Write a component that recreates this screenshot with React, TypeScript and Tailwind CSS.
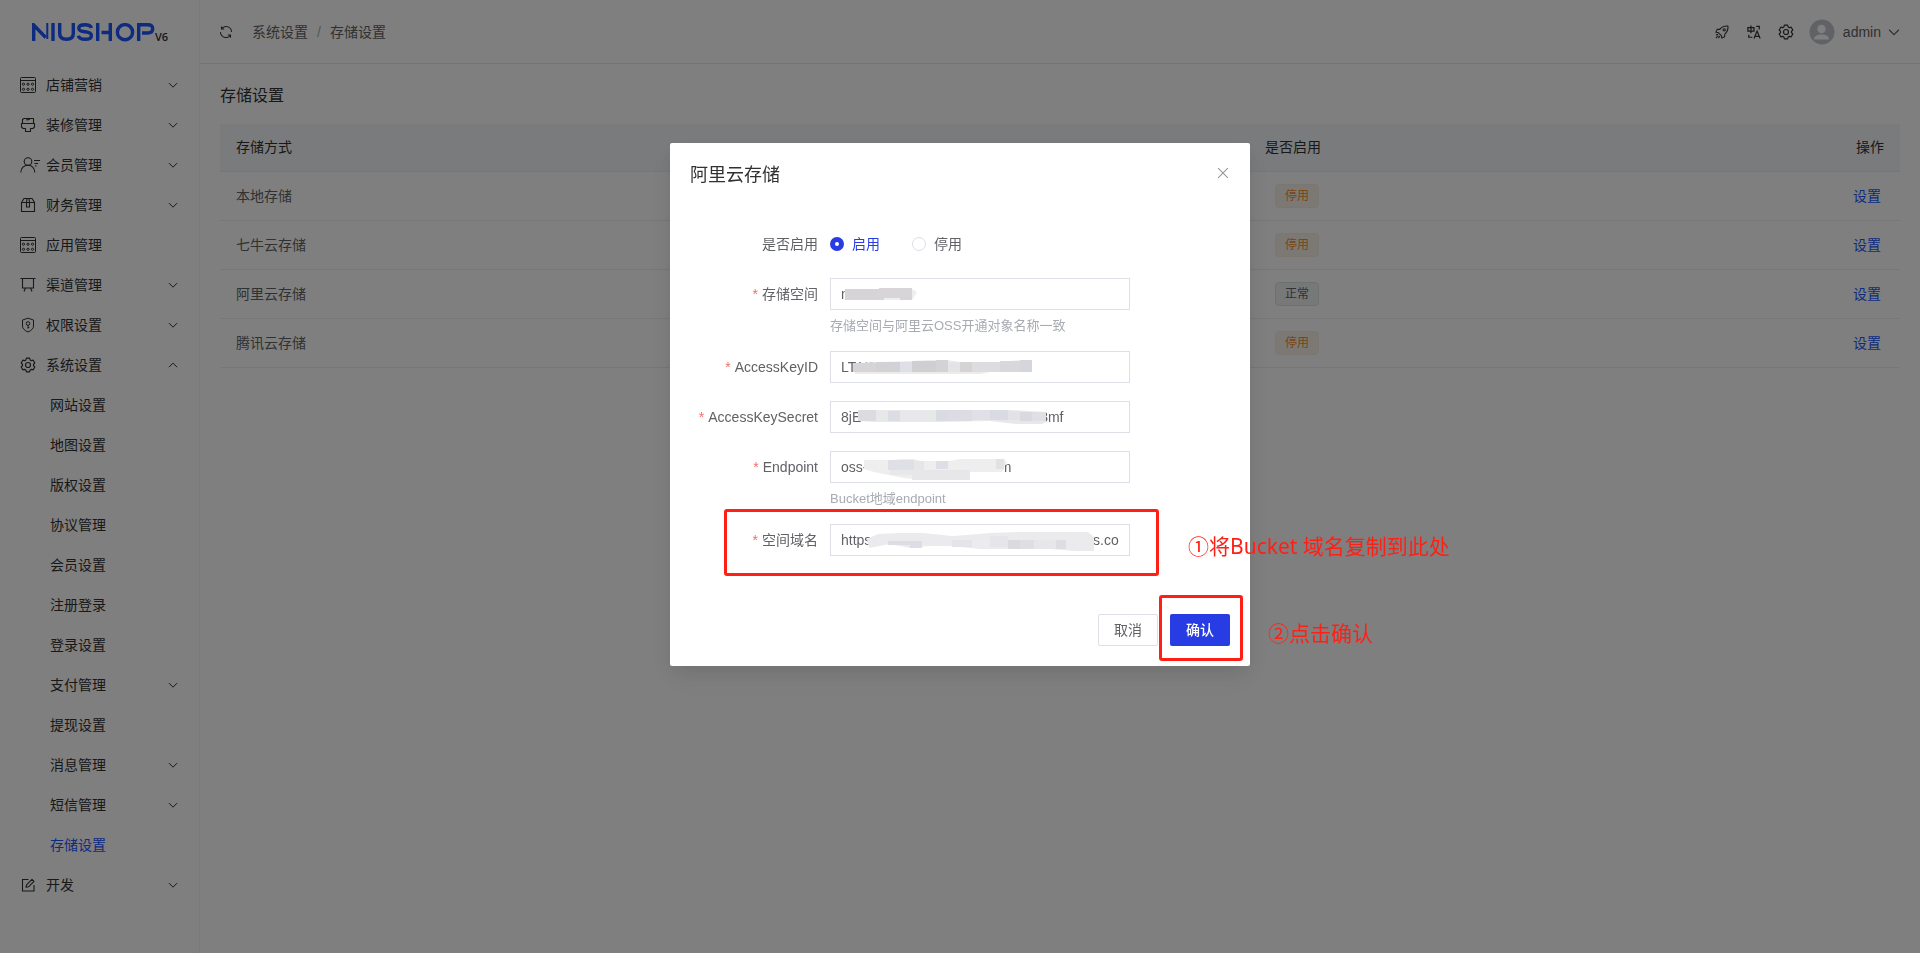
import { useState } from "react";
import type { ReactNode } from "react";

type MenuItem = { title: string; icon?: ReactNode; arrow?: "down" | "up"; active?: boolean };

function Svg({ children, size = 16, className = "", width = 1.1 }: { children: ReactNode; size?: number; className?: string; width?: number }) {
  return (
    <svg width={size} height={size} viewBox="0 0 16 16" fill="none" stroke="currentColor" strokeWidth={width} className={className} aria-hidden="true">
      {children}
    </svg>
  );
}

const GEAR =
  "M6.4 1.2h3.2l.5 1.7 1.3.8 1.8-.5 1.6 2.8-1.3 1.3v1.4l1.3 1.3-1.6 2.8-1.8-.5-1.3.8-.5 1.7H6.4l-.5-1.7-1.3-.8-1.8.5-1.6-2.8 1.3-1.3V7.3L1.2 6l1.6-2.8 1.8.5 1.3-.8z";

function GearIcon({ size = 16 }: { size?: number }) {
  return (
    <Svg size={size} width={1.2}>
      <path d={GEAR} strokeLinejoin="round" />
      <circle cx="8" cy="8" r="2.5" />
    </Svg>
  );
}

function GridIcon() {
  return (
    <Svg width={1}>
      <rect x="0.5" y="0.5" width="15" height="15" rx="1" />
      <path d="M0.5 3.5h15" />
      {[3.5, 8, 12.5].map((x) => (
        <g key={x}>
          <circle cx={x} cy="7.200" r="1.100" />
          <circle cx={x} cy="12.300" r="1.100" />
        </g>
      ))}
    </Svg>
  );
}

function BrushIcon() {
  return (
    <Svg>
      <path d="M2.500 6V2.500l1.500-1h9.500V6M7 1.500v1.500l2-.5 1-1M1.500 6.500h13v3.500l-1.500 1.500h-2.500v3h-5v-3H3L1.500 10z" strokeLinejoin="round" />
    </Svg>
  );
}

function MemberIcon() {
  return (
    <Svg className="overflow-visible">
      <circle cx="8" cy="4.500" r="3.800" />
      <path d="M0.800 15.500c.4-4.300 3.200-7.200 7.200-7.200s6.400 2.900 6.800 7.200M14 3.500h6M14.500 6.500H18M15 9h1.500" />
    </Svg>
  );
}

function FinanceIcon() {
  return (
    <Svg>
      <path d="M1.500 5.500 4 1.500h8l2.500 4v9h-13zM1.500 5.500h13M6.500 5.500v4.500h3V5.500M6.500 5.500l.5-4M9.500 5.500l-.5-4" />
    </Svg>
  );
}

function BoardIcon() {
  return (
    <Svg>
      <path d="M0.500 1.500h15M2.500 1.500v9.500h11V1.500M5.500 11l-1.500 3.500M10.500 11l1.500 3.500" />
    </Svg>
  );
}

function ShieldIcon() {
  return (
    <Svg width={1}>
      <path d="M8 1.200 13.500 3v6c0 2.500-2 4.500-5.500 6-3.500-1.500-5.500-3.500-5.500-6V3z" strokeLinejoin="round" />
      <circle cx="8" cy="6.500" r="1.800" />
      <path d="M8 8.300v3.400M8 10.500h1.300" />
    </Svg>
  );
}

function EditIcon() {
  return (
    <Svg>
      <path d="M8.500 2.500h-6v11.500H14V8" />
      <path d="M6 10.300 6.500 7.800 12 2.300l2 2-5.500 5.500z" strokeLinejoin="round" />
    </Svg>
  );
}

function RefreshIcon() {
  return (
    <svg width="16" height="16" viewBox="0 0 1024 1024" fill="currentColor" aria-hidden="true">
      <path d="M771.776 794.880A384 384 0 0 1 128 512h64a320 320 0 0 0 555.712 216.448H654.720a32 32 0 1 1 0-64h149.056a32 32 0 0 1 32 32v148.928a32 32 0 1 1-64 0v-50.560zM276.288 295.616h92.992a32 32 0 0 1 0 64H220.160a32 32 0 0 1-32-32V178.560a32 32 0 0 1 64 0v50.560A384 384 0 0 1 896.128 512h-64a320 320 0 0 0-555.776-216.384z" />
    </svg>
  );
}

function Chevron({ up = false, size = 10 }: { up?: boolean; size?: number }) {
  return (
    <Svg size={size} width={1.6}>
      <path d={up ? "M1.500 11.500 8 5l6.500 6.500" : "M1.500 5 8 11.500 14.500 5"} />
    </Svg>
  );
}

function Logo() {
  return (
    <svg width="124" height="20" viewBox="0 0 124 20" fill="none" stroke="#1a56ff" strokeWidth="3.400" aria-hidden="true">
      <path d="M2.700 18V2l12 12.500" />
      <path d="M16.300 0v16" strokeWidth="2" />
      <path d="M22 0v18M28.700 0v10.500c0 3.800 2.300 5.800 6.800 5.800s6.800-2 6.800-5.800V0" />
      <path d="M60.500 5c-.8-2.300-2.800-3.300-6.500-3.300-4 0-6.200 1.100-6.200 3.500 0 2.300 1.800 3.100 6.200 3.600 4.300.5 6.400 1.400 6.400 3.900s-2.200 3.600-6.400 3.600c-4 0-6-1.100-6.700-3.500" />
      <path d="M66.700 0v18M70.500 9.500h8M79.300 0v18" />
      <circle cx="94" cy="9.200" r="7.600" />
      <path d="M107.700 18V1.700h9c3.400 0 5 1.400 5 4.100s-1.600 4.200-5 4.200H111" />
    </svg>
  );
}

const topMenu: MenuItem[] = [
  { title: "店铺营销", icon: <GridIcon />, arrow: "down" },
  { title: "装修管理", icon: <BrushIcon />, arrow: "down" },
  { title: "会员管理", icon: <MemberIcon />, arrow: "down" },
  { title: "财务管理", icon: <FinanceIcon />, arrow: "down" },
  { title: "应用管理", icon: <GridIcon /> },
  { title: "渠道管理", icon: <BoardIcon />, arrow: "down" },
  { title: "权限设置", icon: <ShieldIcon />, arrow: "down" },
  { title: "系统设置", icon: <GearIcon />, arrow: "up" },
];

const systemMenu: MenuItem[] = [
  { title: "网站设置" },
  { title: "地图设置" },
  { title: "版权设置" },
  { title: "协议管理" },
  { title: "会员设置" },
  { title: "注册登录" },
  { title: "登录设置" },
  { title: "支付管理", arrow: "down" },
  { title: "提现设置" },
  { title: "消息管理", arrow: "down" },
  { title: "短信管理", arrow: "down" },
  { title: "存储设置", active: true },
];

const storages = [
  { name: "本地存储", enabled: false },
  { name: "七牛云存储", enabled: false },
  { name: "阿里云存储", enabled: true },
  { name: "腾讯云存储", enabled: false },
];

function MenuRow({ item }: { item: MenuItem }) {
  return (
    <li>
      <a href="#" className={`flex h-10 items-center pr-[21px] ${item.icon ? "pl-5" : "pl-[50px]"} ${item.active ? "text-[#1a56ff]" : "text-[#303133]"}`}>
        {item.icon && <span className="mr-[10px] shrink-0">{item.icon}</span>}
        <span className="flex-1">{item.title}</span>
        {item.arrow && <Chevron up={item.arrow === "up"} />}
      </a>
    </li>
  );
}

function Sidebar() {
  return (
    <aside className="w-[200px] shrink-0 border-r border-[#f4f4f5] bg-white">
      <div className="flex h-[65px] items-center pl-[31px]">
        <Logo />
        <span className="mt-2 font-['Open_Sans',sans-serif] text-[11px] font-semibold text-[#303133]">V6</span>
      </div>
      <nav>
        <ul>
          {topMenu.map((item) => (
            <MenuRow key={item.title} item={item} />
          ))}
          {systemMenu.map((item) => (
            <MenuRow key={item.title} item={item} />
          ))}
          <MenuRow item={{ title: "开发", icon: <EditIcon />, arrow: "down" }} />
        </ul>
      </nav>
    </aside>
  );
}

function Header() {
  return (
    <header className="flex h-16 items-center justify-between border-b border-[#e4e7ed] pr-5 pl-[18px] text-[#606266]">
      <div className="flex items-center">
        <button aria-label="刷新" className="mr-[18px] text-[#303133]">
          <RefreshIcon />
        </button>
        <span>系统设置</span>
        <span className="mx-[9px] text-[#a8abb2]">/</span>
        <span>存储设置</span>
      </div>
      <div className="flex items-center text-[#303133]">
        <button aria-label="升级" className="mr-[18px]">
          <Svg size={14} width={1.200}>
            <path d="M14.800 1.200c-4.500-.3-7.300 1-9.300 3.800L2.500 5 1 8.200l2.500.3 4 4 .3 2.500L11 13.500l.2-3c2.600-2.200 4-5 3.600-9.300zM3.500 10.500 1 11.500M5.500 12.500 4 15M3.800 12.200 1 15" strokeLinejoin="round" />
            <circle cx="10.500" cy="5.500" r="1.300" />
          </Svg>
        </button>
        <button aria-label="语言" className="mr-[17px]">
          <Svg size={14} width={1.400}>
            <path d="M1 3h7v4H1zM4.500.5v9M10.500 1.500H14V5M2 11v3h4M8 15.500 11.500 7l3.500 8.500M9.200 13h4.600" />
          </Svg>
        </button>
        <button aria-label="设置" className="mr-[15px]">
          <GearIcon />
        </button>
        <button className="flex items-center text-[#606266]">
          <svg width="26" height="26" viewBox="0 0 26 26" aria-hidden="true">
            <circle cx="13" cy="13" r="12.500" fill="#c0c4cc" />
            <circle cx="12.500" cy="10" r="4.200" fill="#fff" />
            <path d="M5 20.500c0-3.500 3-5 7.500-5s7.500 1.500 7.500 5z" fill="#fff" />
          </svg>
          <span className="mr-[7px] ml-2">admin</span>
          <Chevron size={12} />
        </button>
      </div>
    </header>
  );
}

function StorageTable() {
  return (
    <table className="w-full table-fixed text-left text-[#606266]">
      <thead>
        <tr className="h-[47px] border-b border-[#ebeef5] bg-[#f5f7fa] text-[#303133]">
          <th className="px-4 font-normal">存储方式</th>
          <th className="w-[425px] px-4 font-normal">是否启用</th>
          <th className="w-[226px] px-4 text-right font-normal">操作</th>
        </tr>
      </thead>
      <tbody>
        {storages.map((row) => (
          <tr key={row.name} className="h-[49px] border-b border-[#ebeef5]">
            <td className="px-4">{row.name}</td>
            <td className="px-[26px]">
              <span
                className={`inline-flex h-6 items-center rounded border px-[9px] text-xs ${
                  row.enabled ? "border-[#dcdfe6] bg-[#eff2f2] text-[#606266]" : "border-[#f8ede0] bg-[#f9f2ea] text-[#f28a32]"
                }`}
              >
                {row.enabled ? "正常" : "停用"}
              </span>
            </td>
            <td className="px-[19px] text-right">
              <button className="text-[#1a56ff]">设置</button>
            </td>
          </tr>
        ))}
      </tbody>
    </table>
  );
}

type Piece = [number, number, number, number, string];
type Mask = { shape: string; fill: string; blocks: Piece[] };

// smudges that hide part of a saved value: an outline, then blocks of x, y, width, height and fill
const masks: Record<string, Mask> = {
  bucket: { shape: "M15 11H49V10H80L87 14 82 22H15z", fill: "#eeedef", blocks: [[15, 11, 39, 11, "#d6d4d7"], [49, 10, 33, 10, "#d7d5d7"], [70, 18, 12, 4, "#d6d4d7"]] },
  keyId: {
    shape: "M23 12 46 11 82 10 98 9H118L130 11H170L190 9H202V21H160L150 23H25z",
    fill: "#ececed",
    blocks: [
      [23, 12, 23, 9, "#d6d4d6"], [46, 11, 24, 10, "#d2d1d4"], [70, 11, 12, 10, "#dedfe7"], [82, 10, 24, 11, "#cfcfd1"],
      [106, 9, 12, 12, "#d3d3d5"], [118, 11, 12, 10, "#e4e4e7"], [130, 11, 12, 10, "#d5d3d4"], [142, 11, 28, 10, "#dcdce1"],
      [170, 10, 20, 11, "#d8d7d9"], [190, 9, 12, 12, "#d5d6db"],
    ],
  },
  secret: {
    shape: "M28 9H106L180 9 216 11V21L212 23H186L160 20 106 21H46L28 20z",
    fill: "#e8e8ea",
    blocks: [
      [28, 9, 18, 11, "#dcdce0"], [58, 10, 12, 10, "#dbdde5"], [106, 9, 12, 11, "#d9dbe3"], [118, 9, 24, 11, "#dcdce2"],
      [142, 9, 18, 10, "#e0e0e6"], [160, 9, 18, 10, "#d9dae2"], [178, 10, 12, 9, "#e2e2e7"], [190, 11, 12, 9, "#d9dae1"],
      [202, 11, 14, 9, "#dfdfe4"],
    ],
  },
  endpoint: {
    shape: "M34 9H62L72 8H84L92 10H120L130 8H174L177 11 172 21H140V29H96L74 27 44 21 34 18z",
    fill: "#eeeeef",
    blocks: [
      [58, 9, 26, 10, "#dfdfe6"], [84, 10, 10, 9, "#e6e6e9"], [106, 10, 12, 8, "#dedee7"], [166, 8, 8, 10, "#e2e2e4"],
      [60, 19, 70, 5, "#e8e8e9"], [82, 19, 58, 10, "#e7e7e9"],
    ],
  },
  domain: {
    shape: "M37 15 48 10 70 9H94L122 12H124L160 9 190 8H258L264 13V27H246L220 25H150L120 22 98 22 80 24 60 20 39 24z",
    fill: "#ebebed",
    blocks: [
      [58, 17, 22, 4, "#dddde5"], [80, 17, 12, 7, "#dddde5"], [122, 16, 20, 7, "#e4e4ea"], [142, 16, 18, 8, "#ececee"],
      [160, 12, 18, 11, "#e6e6ea"], [178, 16, 12, 9, "#dadadf"], [190, 16, 14, 9, "#dedee3"], [204, 16, 22, 9, "#e7e7e9"],
      [226, 16, 10, 9, "#dddde4"],
    ],
  },
};

const fields = [
  { key: "bucket", label: "存储空间", value: "n", tip: "存储空间与阿里云OSS开通对象名称一致" },
  { key: "keyId", label: "AccessKeyID", value: "LTAI5" },
  { key: "secret", label: "AccessKeySecret", value: `8jE${" ".repeat(46)}3mf` },
  { key: "endpoint", label: "Endpoint", value: `oss-${" ".repeat(34)}m`, tip: "Bucket地域endpoint" },
  { key: "domain", label: "空间域名", value: `https${" ".repeat(57)}s.co` },
];

function RadioOption({ label, checked, onChange, className = "" }: { label: string; checked: boolean; onChange: () => void; className?: string }) {
  return (
    <label className={`flex items-center gap-2 ${checked ? "text-[#273de3]" : ""} ${className}`}>
      <input
        type="radio"
        name="is_use"
        checked={checked}
        onChange={onChange}
        className="size-[14px] appearance-none rounded-full border border-[#dcdfe6] bg-white checked:border-5 checked:border-[#273de3]"
      />
      {label}
    </label>
  );
}

function StorageDialog() {
  const [enabled, setEnabled] = useState(true);
  const [form, setForm] = useState<Record<string, string>>(Object.fromEntries(fields.map((f) => [f.key, f.value])));

  return (
    <div
      role="dialog"
      aria-label="阿里云存储"
      className="relative mt-[15vh] w-[580px] rounded-[2px] bg-white p-5 text-[#606266] shadow-[0_12px_32px_4px_rgba(0,0,0,0.04),0_8px_20px_rgba(0,0,0,0.08)]"
    >
      <div className="flex h-6 items-center justify-between">
        <h2 className="text-lg text-[#303133]">阿里云存储</h2>
        <button aria-label="关闭" className="mr-px mb-1 text-[#909399]">
          <Svg size={12} width={1.400}>
            <path d="M1.500 1.500l13 13M14.500 1.500l-13 13" />
          </Svg>
        </button>
      </div>

      <form className="mt-[41px]">
        <div role="radiogroup" aria-labelledby="is_use_label" className="mb-[18px] flex h-8 items-center">
          <span id="is_use_label" className="w-[140px] pr-3 text-right">
            是否启用
          </span>
          <RadioOption label="启用" checked={enabled} onChange={() => setEnabled(true)} />
          <RadioOption label="停用" checked={!enabled} onChange={() => setEnabled(false)} className="ml-8" />
        </div>

        {fields.map((f) => (
          <div key={f.key} className="mb-[18px] flex">
            <label htmlFor={f.key} className="w-[140px] pr-3 text-right leading-8">
              <span className="mr-1 text-[#f56c6c]">*</span>
              {f.label}
            </label>
            <div>
              <div className="relative h-8 w-[300px]">
                <input
                  id={f.key}
                  value={form[f.key]}
                  onChange={(e) => setForm({ ...form, [f.key]: e.target.value })}
                  className="h-8 w-full border border-[#dcdfe6] px-[10px] outline-none"
                />
                <svg width="300" height="32" className="pointer-events-none absolute inset-0" aria-hidden="true">
                  <path d={masks[f.key].shape} fill={masks[f.key].fill} />
                  {masks[f.key].blocks.map(([x, y, w, h, fill], i) => (
                    <rect key={i} x={x} y={y} width={w} height={h} fill={fill} />
                  ))}
                </svg>
              </div>
              {f.tip && <p className="h-[23px] pt-[6px] text-[13px] leading-5 text-[#a8abb2]">{f.tip}</p>}
            </div>
          </div>
        ))}
      </form>

      <div className="mt-[58px] flex justify-end gap-3">
        <button className="h-8 w-[60px] rounded-[2px] border border-[#dcdfe6]">取消</button>
        <button className="h-8 w-[60px] rounded-[2px] bg-[#273de3] font-medium text-white">确认</button>
      </div>

      {/* step callouts drawn over the dialog */}
      <div className="pointer-events-none absolute top-[366px] left-[54px] h-[67px] w-[435px] rounded-[3px] border-3 border-[#ff2015]" />
      <div className="pointer-events-none absolute top-[452px] left-[489px] h-[66px] w-[84px] rounded-[3px] border-3 border-[#ff2015]" />
      <p className="absolute top-[388px] left-[518px] font-['Noto_Sans','Noto_Sans_CJK_SC',sans-serif] text-[21px] leading-[30px] whitespace-nowrap text-[#ff2015]">
        ①将Bucket 域名复制到此处
      </p>
      <p className="absolute top-[475px] left-[598px] font-['Noto_Sans','Noto_Sans_CJK_SC',sans-serif] text-[21px] leading-[30px] whitespace-nowrap text-[#ff2015]">
        ②点击确认
      </p>
    </div>
  );
}

export default function App() {
  return (
    <div className="flex min-h-screen bg-white font-['Liberation_Sans','Noto_Sans_CJK_SC',sans-serif] text-sm">
      <Sidebar />
      <div className="min-w-0 flex-1">
        <Header />
        <main className="px-5 pt-5">
          <h1 className="mb-4 text-base text-[#303133]">存储设置</h1>
          <StorageTable />
        </main>
      </div>
      <div className="fixed inset-0 flex items-start justify-center bg-black/50">
        <StorageDialog />
      </div>
    </div>
  );
}
